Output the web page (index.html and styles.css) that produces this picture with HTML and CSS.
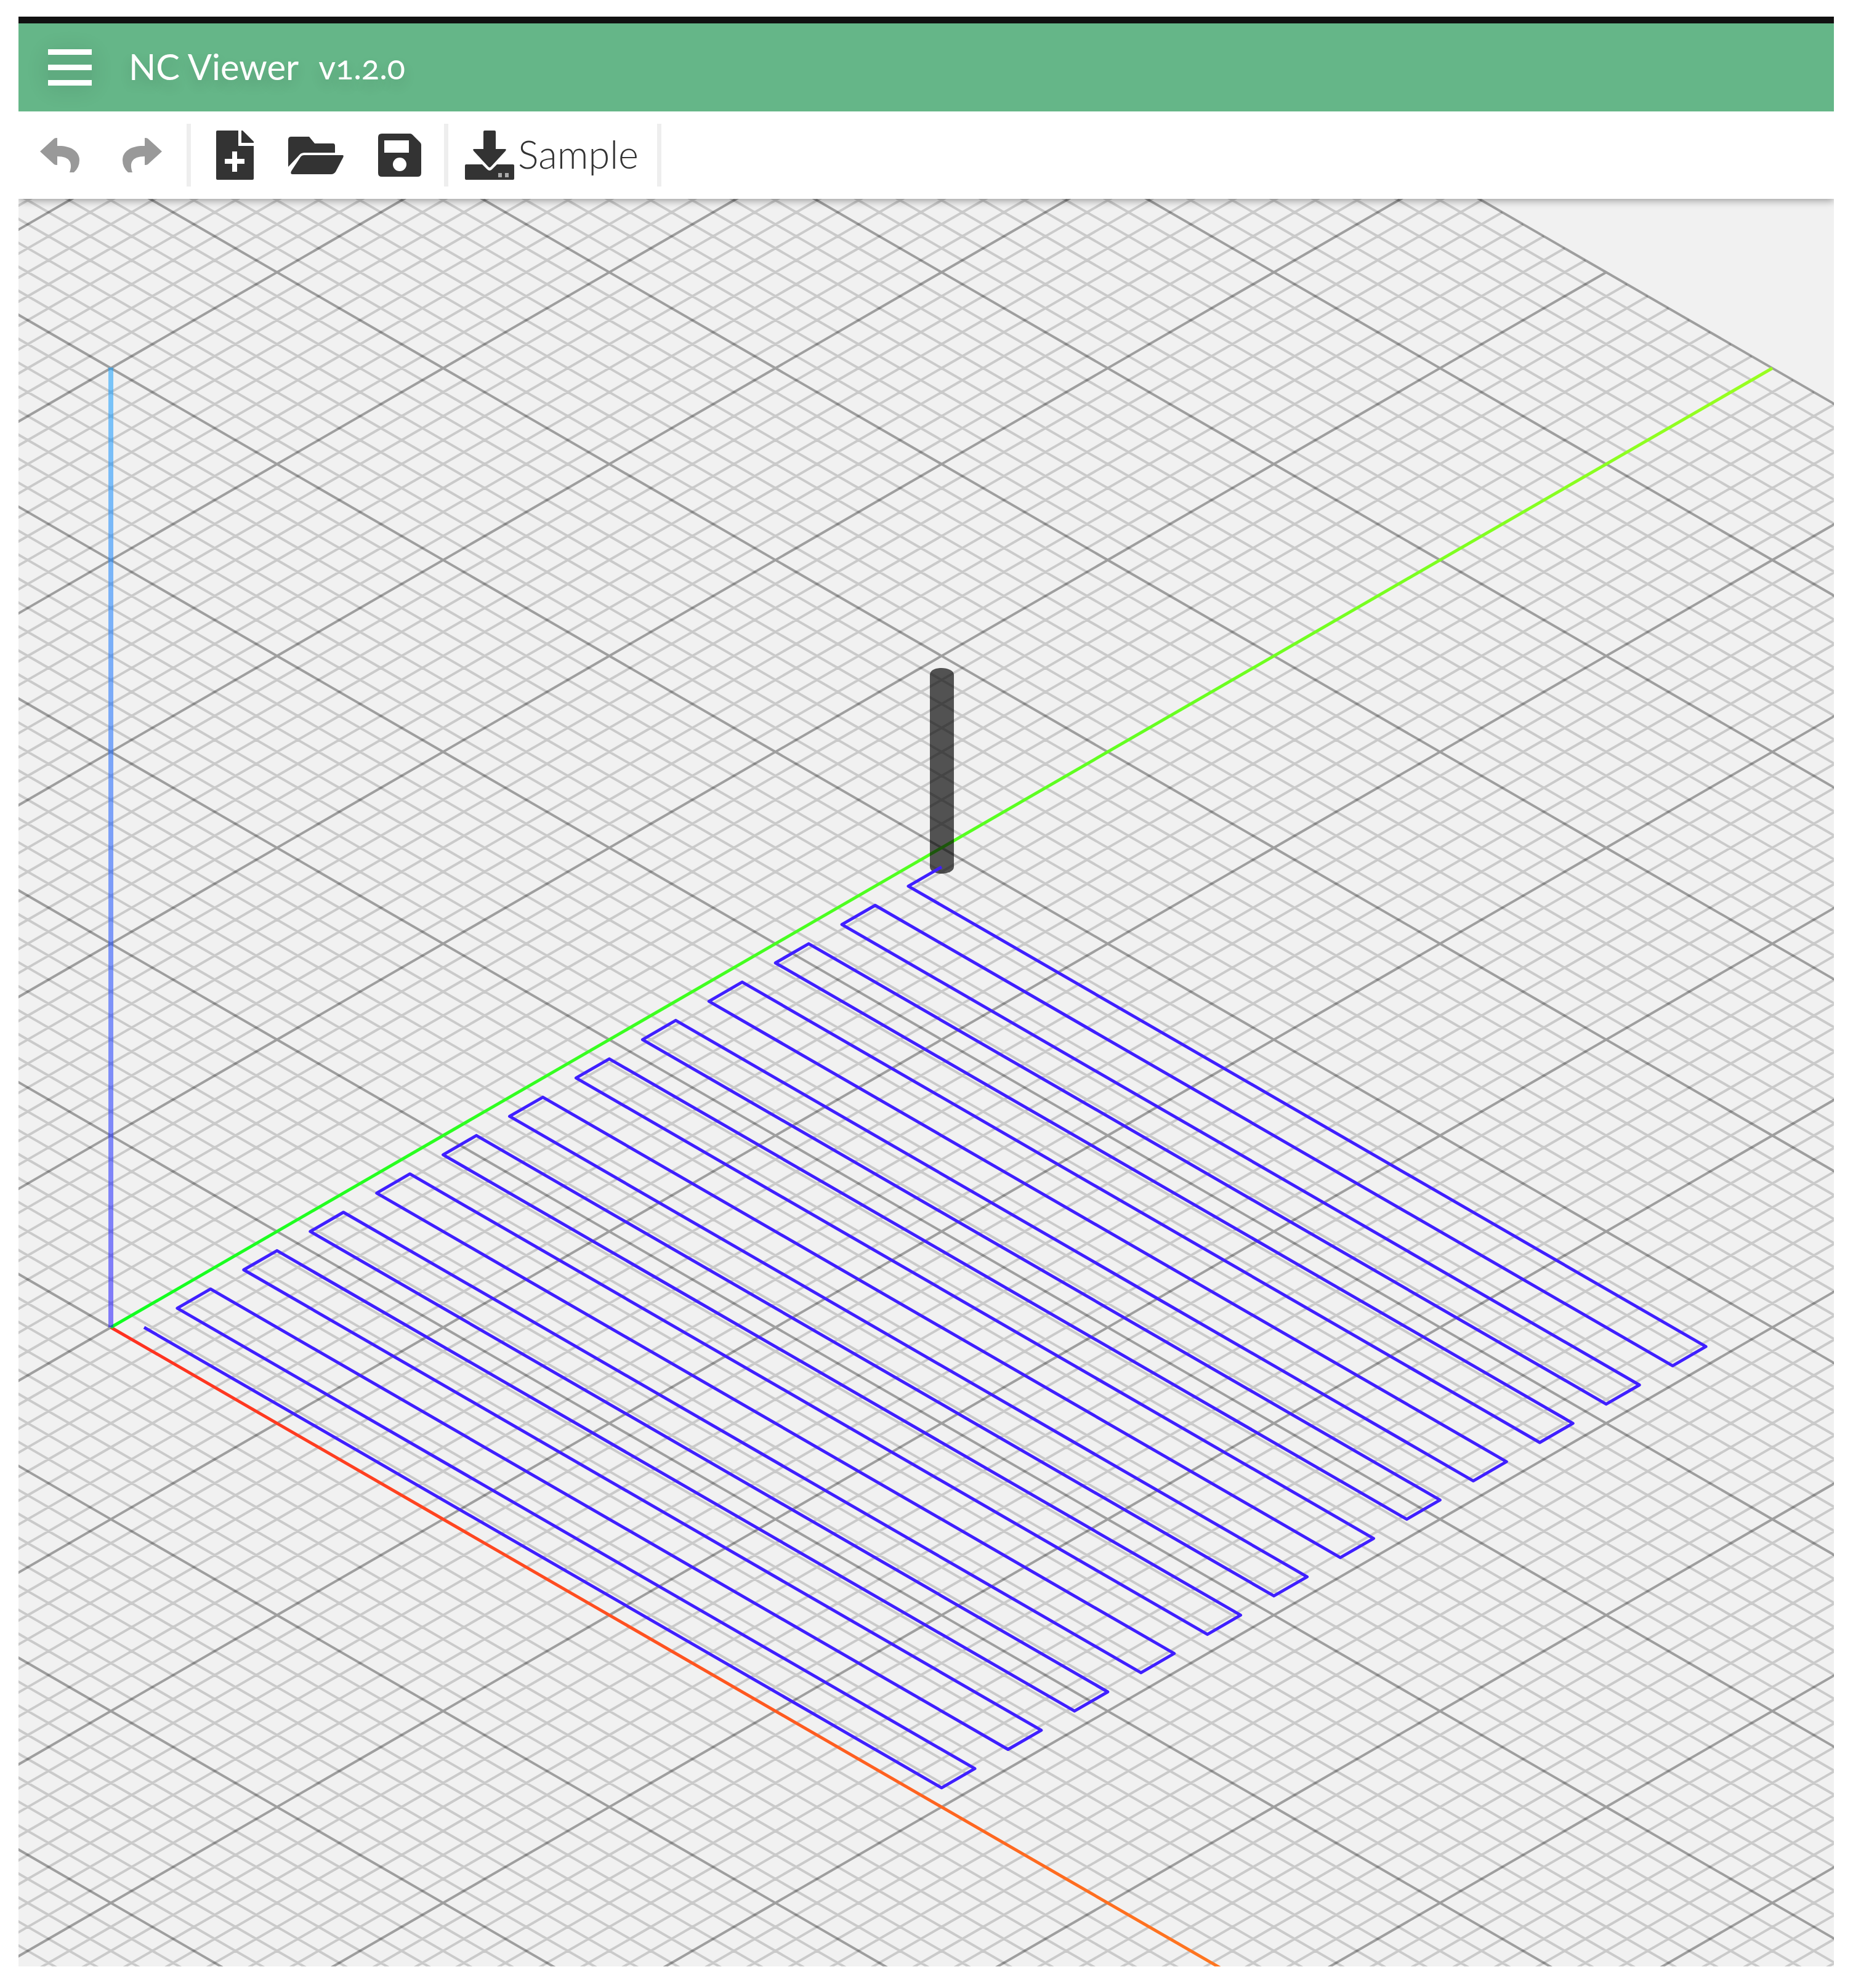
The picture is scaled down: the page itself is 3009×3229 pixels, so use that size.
FILE: index.html
```
<!DOCTYPE html>
<html lang="en">
<head>
<meta charset="utf-8">
<title>NC Viewer</title>
<link rel="stylesheet" href="styles.css">
</head>
<body>
<div class="app">
  <header class="titlebar">
    <button class="menu-button" type="button" aria-label="Menu"><span class="bar"></span><span class="bar"></span><span class="bar"></span></button>
    <h1 class="title">NC Viewer</h1>
    <span class="version">v1.2.0</span>
  </header>

  <nav class="toolbar" aria-label="File tools">
    <div class="group history">
      <button class="tool" type="button" aria-label="Undo" disabled>
        <svg width="64" height="56" viewBox="0 0 64 56"><path d="M0 22 23 1Q24 0 28 0V13C50 12 64 22 64 36Q64 48 55 56H48C53 42 50 30 28 30V44Q24 44 23 43Z"/></svg>
      </button>
      <button class="tool" type="button" aria-label="Redo" disabled>
        <svg width="64" height="56" viewBox="0 0 64 56"><path d="M64 22 41 1Q40 0 36 0V13C14 12 0 22 0 36Q0 48 9 56H16C11 42 14 30 36 30V44Q40 44 41 43Z"/></svg>
      </button>
    </div>
    <div class="group files">
      <button class="tool" type="button" aria-label="New file">
        <svg width="61" height="80" viewBox="0 0 61 80"><path fill-rule="evenodd" d="M2 0H36V25H61V78Q61 80 59 80H2Q0 80 0 78V2Q0 0 2 0ZM26 34V46H14V54H26V67H34V54H46V46H34V34ZM41 0H43L61 18V20H41Z"/></svg>
      </button>
      <button class="tool" type="button" aria-label="Open file">
        <svg width="90" height="63" viewBox="0 0 90 63"><path d="M0 50V6Q0 1 5 1H34L43 12H73Q76 12 76 16V27H26Q20 27 16 33ZM5 57 20 34Q22 31 26 31H88Q91 31 89 35L77 58Q74 62 70 62H7Q3 62 5 57Z"/></svg>
      </button>
      <button class="tool" type="button" aria-label="Save file">
        <svg width="70" height="70" viewBox="0 0 70 70"><path fill-rule="evenodd" d="M6 0H52Q54 0 56 2L68 14Q70 16 70 18V64Q70 70 64 70H6Q0 70 0 64V6Q0 0 6 0ZM10 11V31H50V11ZM35 39A11 11 0 1 0 35 61A11 11 0 1 0 35 39Z"/></svg>
      </button>
    </div>
    <div class="group sample">
      <button class="tool" type="button">
        <svg width="80" height="80" viewBox="0 0 80 80"><path d="M32 0H48Q50 0 50 2V30H65Q68 30 66 33L42 59Q40 61 38 59L14 33Q12 30 15 30H30V2Q30 0 32 0ZM2 55H28L36 63Q40 67 44 63L52 55H78Q80 55 80 57V78Q80 80 78 80H2Q0 80 0 78V57Q0 55 2 55Z"/><path class="lamp" d="M54 69h6v7h-6zM65 69h6v7h-6z"/></svg>
        <span>Sample</span>
      </button>
    </div>
  </nav>

  <main class="viewport">
    <svg class="scene" viewBox="30 323 2948 2871" preserveAspectRatio="xMinYMin slice" role="img" aria-label="Tool path">
      <defs>
        <linearGradient id="x-color" gradientUnits="userSpaceOnUse" x1="180" y1="2156" x2="2878" y2="3714"><stop offset="0" stop-color="#ff3020"/><stop offset="1" stop-color="#ff9920"/></linearGradient>
        <linearGradient id="y-color" gradientUnits="userSpaceOnUse" x1="180" y1="2156" x2="2878" y2="598"><stop offset="0" stop-color="#10ff20"/><stop offset="1" stop-color="#99ff20"/></linearGradient>
        <linearGradient id="z-color" gradientUnits="userSpaceOnUse" x1="180" y1="2156" x2="180" y2="598"><stop offset="0" stop-color="#1000ff"/><stop offset="1" stop-color="#0099ff"/></linearGradient>
      </defs>
      <path id="grid-minor" class="grid-minor"/>
      <path id="grid-major" class="grid-major"/>
      <path id="axis-x" class="axis" stroke="url(#x-color)"/>
      <path id="axis-y" class="axis" stroke="url(#y-color)"/>
      <rect class="axis-z" x="176" y="597" width="8" height="1559" fill="url(#z-color)"/>
      <path class="cutter" d="M1510 1096C1510 1089 1519 1085 1529 1085S1549 1089 1549 1096V1408C1549 1415 1539 1419 1529 1419S1510 1415 1510 1408Z"/>
      <path id="toolpath" class="toolpath"/>
    </svg>
  </main>
</div>
<script src="scene.js"></script>
</body>
</html>
```
FILE: styles.css
```
* { box-sizing: border-box; }

body {
  margin: 0;
  background: #fff;
  font-family: Lato, "Open Sans", sans-serif;
  font-size: 58px;
  line-height: 72px;
  color: #333;
}

.app {
  display: flex;
  flex-direction: column;
  height: 100vh;
  padding: 27px 31px 35px 30px;
}

button {
  display: flex;
  align-items: center;
  margin: 0;
  padding: 0;
  border: 0;
  background: none;
  font: inherit;
  color: inherit;
}

.titlebar {
  flex: none;
  display: flex;
  align-items: center;
  height: 154px;
  padding-left: 48px;
  border-top: 11px solid #111;
  background: #65b688;
  color: #fff;
  text-shadow: 0 10px 20px rgba(0, 0, 0, 0.14);
}

.menu-button {
  flex-direction: column;
  gap: 16px;
  width: 71px;
  margin-right: 60px;
  border-radius: 16px;
  background: rgba(0, 0, 0, 0.06);
  box-shadow: 0 4px 32px 8px rgba(0, 0, 0, 0.07);
}

.bar {
  width: 100%;
  height: 9px;
  background: #fff;
}

.title {
  margin: 0 32px 0 0;
  padding-bottom: 4px;
  font-size: 58px;
  font-weight: 400;
}

.version {
  padding-bottom: 2px;
  font-size: 54px;
  font-variant-numeric: oldstyle-nums;
}

.toolbar {
  position: relative;
  z-index: 1;
  flex: none;
  display: flex;
  align-items: center;
  height: 142px;
  padding-left: 35px;
  background: #fff;
  box-shadow: 0 3px 12px rgba(0, 0, 0, 0.36);
  clip-path: inset(0 0 -24px 0);
}

.group {
  display: flex;
  align-items: center;
  height: 102px;
  border-right: 7px solid #eee;
}

.history { gap: 70px; padding-right: 40px; }
.files { gap: 56px; padding: 0 37px 0 41px; }
.sample { padding: 0 30px 0 27px; }
.sample .tool { gap: 6px; font-size: 63px; font-weight: 300; }
.sample span { padding-bottom: 5px; }

.tool svg {
  display: block;
  fill: #333;
}

.tool:disabled svg { fill: #999; }
.tool .lamp { fill: #aaa; }

.viewport {
  flex: 1;
  min-height: 0;
  background: #f1f1f1;
}

.scene {
  display: block;
  width: 100%;
  height: 100%;
}

.scene path { fill: none; }
.scene .grid-minor { stroke: rgba(0, 0, 0, 0.16); stroke-width: 4px; }
.scene .grid-major { stroke: rgba(0, 0, 0, 0.34); stroke-width: 4px; }
.scene .axis { stroke-width: 5px; }
.scene .axis-z { opacity: 0.5; }
.scene .cutter { fill: rgba(0, 0, 0, 0.66); }
.scene .toolpath { stroke: #3f1fff; stroke-width: 5px; stroke-linejoin: round; }
```
FILE: scene.js
```
// Isometric projection: one unit is one major grid cell.
const ORIGIN = [180, 2156];
const CELL = [269.8, 155.8];
const EXTENT = 10;
const MINOR = 8;

const point = (x, y) =>
  (ORIGIN[0] + (x + y) * CELL[0]).toFixed(1) + ' ' + (ORIGIN[1] + (x - y) * CELL[1]).toFixed(1);

const draw = (id, d) => document.getElementById(id).setAttribute('d', d);

// Each line is its own subpath; majors are drawn over the minors.
let minor = '';
let major = '';
for (let i = -EXTENT * MINOR; i <= EXTENT * MINOR; i++) {
  const v = i / MINOR;
  const lines = 'M' + point(v, -EXTENT) + 'L' + point(v, EXTENT) +
    'M' + point(-EXTENT, v) + 'L' + point(EXTENT, v);
  if (i % MINOR === 0) major += lines;
  else minor += lines;
}
draw('grid-minor', minor);
draw('grid-major', major);
draw('axis-x', 'M' + point(0, 0) + 'L' + point(EXTENT, 0));
draw('axis-y', 'M' + point(0, 0) + 'L' + point(0, EXTENT));

// Zigzag pocket: passes along X, stepping over in Y.
const stops = [point(0.1, 0.1)];
for (let row = 0; row < 24; row++) {
  const x = row % 2 === 0 ? 4.9 : 0.1;
  stops.push(point(x, 0.1 + row * 0.2), point(x, 0.3 + row * 0.2));
}
draw('toolpath', 'M' + stops.join('L'));
```
